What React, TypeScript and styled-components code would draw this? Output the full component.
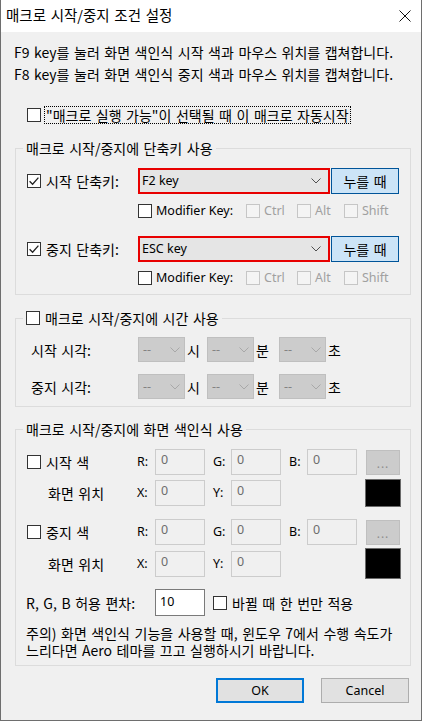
import React from "react";
import styled, { createGlobalStyle } from "styled-components";

const Global = createGlobalStyle`
  html, body { margin: 0; padding: 0; background: #ffffff; }
  body {
    font-family: "Noto Sans CJK KR", "Noto Sans", sans-serif;
    font-size: 14px;
    word-spacing: 1.4px;
    color: #000;
  }
  * { box-sizing: border-box; }
`;

const Latin = styled.span`
  font-family: "Noto Sans", "Noto Sans CJK KR", sans-serif;
  font-size: 12.5px;
  word-spacing: 0;
`;

const Window = styled.div`
  width: 422px;
  height: 721px;
  border: 1px solid #6e6e6e;
  border-top: none;
  background: #f0f0f0;
  display: flex;
  flex-direction: column;
`;

const TitleBar = styled.div`
  height: 32px;
  background: #ffffff;
  display: flex;
  align-items: center;
  padding-left: 5px;
  flex-shrink: 0;
`;

const Title = styled.div`
  flex: 1;
  font-size: 14.5px;
  line-height: 18px;
  padding-bottom: 3px;
`;

const CloseBox = styled.div`
  width: 32px;
  height: 32px;
  display: flex;
  align-items: center;
  justify-content: center;
`;

const Body = styled.div`
  padding-top: 9px;
  display: flex;
  flex-direction: column;
`;

const InfoText = styled.div`
  padding-left: 13px;
  line-height: 22px;
  white-space: nowrap;
`;

const AutoRow = styled.div`
  margin: 21px 0 0 26px;
  height: 18px;
  display: flex;
  align-items: center;
`;

const FocusLabel = styled.span`
  margin-left: 3px;
  border: 1px dotted #000;
  height: 18px;
  line-height: 16px;
  padding: 0 1px;
  white-space: nowrap;
`;

const Box = styled.span<{ $disabled?: boolean }>`
  width: 14px;
  height: 14px;
  flex-shrink: 0;
  display: inline-flex;
  align-items: center;
  justify-content: center;
  border: 1px solid ${(p) => (p.$disabled ? "#c6c6c6" : "#333333")};
  background: ${(p) => (p.$disabled ? "#f4f4f4" : "#ffffff")};
`;

const CheckItem = styled.span<{ $w?: number; $gap?: number; $disabled?: boolean }>`
  display: inline-flex;
  align-items: center;
  gap: ${(p) => p.$gap ?? 5}px;
  width: ${(p) => (p.$w ? `${p.$w}px` : "auto")};
  white-space: nowrap;
  color: ${(p) => (p.$disabled ? "#a0a0a0" : "#000")};
  line-height: 16px;
  flex-shrink: 0;
`;

const Check: React.FC<{ checked?: boolean; disabled?: boolean }> = ({ checked, disabled }) => (
  <Box $disabled={disabled}>
    {checked && (
      <svg width="12" height="12" viewBox="0 0 12 12">
        <path d="M1.6 6.2 L4.6 9.2 L10.4 2.6" stroke="#222" strokeWidth="1.3" fill="none" />
      </svg>
    )}
  </Box>
);

const Chevron: React.FC<{ color: string }> = ({ color }) => (
  <svg width="10" height="6" viewBox="0 0 10 6">
    <path d="M0.5 0.5 L5 5 L9.5 0.5" stroke={color} strokeWidth="1" fill="none" />
  </svg>
);

const Group = styled.fieldset<{ $mt: number }>`
  margin: ${(p) => p.$mt}px 0 0 14px;
  width: 396px;
  min-width: 0;
  padding: 0;
  border: 1px solid #dcdcdc;
`;

const Legend = styled.legend`
  margin-left: 7px;
  padding: 0 3px;
  height: 16px;
  line-height: 16px;
  white-space: nowrap;
`;

const LegendInner = styled.span`
  display: inline-flex;
  align-items: center;
  gap: 5px;
  height: 16px;
`;

const GroupBody = styled.div<{ $pad: string }>`
  padding: ${(p) => p.$pad};
  display: flex;
  flex-direction: column;
`;

const ShortcutRow = styled.div<{ $mt?: number }>`
  margin-top: ${(p) => p.$mt ?? 0}px;
  height: 26px;
  display: flex;
  align-items: center;
`;

const KeyCombo = styled.div`
  width: 192px;
  height: 26px;
  border: 2px solid #e80000;
  background: #e5e5e5;
  display: flex;
  align-items: center;
  justify-content: space-between;
  padding: 0 7px 0 2px;
  line-height: 16px;
`;

const PressButton = styled.div`
  width: 68px;
  height: 26px;
  margin-left: 1px;
  background: #cce4f7;
  border: 1px solid #005499;
  display: flex;
  align-items: center;
  justify-content: center;
  line-height: 16px;
`;

const ModRow = styled.div<{ $mt: number }>`
  margin-top: ${(p) => p.$mt}px;
  padding-left: 111px;
  height: 16px;
  display: flex;
  align-items: center;
`;

const TimeRow = styled.div<{ $mt?: number }>`
  margin-top: ${(p) => p.$mt ?? 0}px;
  padding-left: 15px;
  height: 25px;
  display: flex;
  align-items: center;
`;

const TimeLabel = styled.span`
  width: 107px;
  line-height: 16px;
  white-space: nowrap;
`;

const TimeCombo = styled.div`
  width: 47px;
  height: 25px;
  background: #cccccc;
  border: 1px solid #bfbfbf;
  display: flex;
  align-items: center;
  justify-content: space-between;
  padding: 0 4px 0 4px;
  color: #838383;
  line-height: 16px;
`;

const Unit = styled.span<{ $w: number }>`
  width: ${(p) => p.$w}px;
  padding-left: 2px;
  line-height: 16px;
`;

const ColorRow = styled.div<{ $h: number; $mt?: number }>`
  margin-top: ${(p) => p.$mt ?? 0}px;
  padding-left: 11px;
  height: ${(p) => p.$h}px;
  display: grid;
  grid-template-columns: 110px 18px 50px 8px 18px 50px 8px 18px 50px 8px 36px;
  align-items: center;
`;

const AxisLabel = styled(Latin)<{ $col: number }>`
  grid-column: ${(p) => p.$col};
  line-height: 16px;
`;

const SubLabel = styled.span`
  grid-column: 1;
  padding-left: 21px;
  line-height: 16px;
  white-space: nowrap;
`;

const NumInput = styled.div<{ $col: number; $enabled?: boolean }>`
  grid-column: ${(p) => p.$col};
  height: ${(p) => (p.$enabled ? 27 : 26)}px;
  border: 1px solid ${(p) => (p.$enabled ? "#7a7a7a" : "#cccccc")};
  background: ${(p) => (p.$enabled ? "#ffffff" : "#f0f0f0")};
  color: ${(p) => (p.$enabled ? "#000" : "#6d6d6d")};
  padding: ${(p) => (p.$enabled ? "4px 4px" : "2px 5px")};
  line-height: 16px;
  font-family: "Noto Sans", sans-serif;
  font-size: 12.5px;
`;

const DotsButton = styled.div`
  grid-column: 11;
  justify-self: center;
  width: 34px;
  height: 25px;
  background: #cccccc;
  border: 1px solid #bfbfbf;
  color: #8e8e8e;
  display: flex;
  align-items: flex-end;
  justify-content: center;
  padding-bottom: 4px;
  line-height: 12px;
  font-family: "Noto Sans", sans-serif;
  font-size: 12px;
  letter-spacing: 1px;
`;

const Swatch = styled.div<{ $h: number }>`
  grid-column: 11;
  width: 36px;
  height: ${(p) => p.$h}px;
  background: #000;
  border: 1px solid #6a6a6a;
`;

const ToleranceLabel = styled.span`
  grid-column: 1 / 3;
  margin-left: -1px;
  line-height: 16px;
  white-space: nowrap;
`;

const OnceItem = styled.span`
  grid-column: 5 / -1;
  display: inline-flex;
  align-items: center;
  gap: 5px;
  line-height: 16px;
  white-space: nowrap;
`;

const Note = styled.div`
  margin-top: 9px;
  padding-left: 10px;
  line-height: 17px;
  white-space: nowrap;
`;

const Footer = styled.div`
  margin-top: 12px;
  padding-right: 12px;
  display: flex;
  justify-content: flex-end;
  gap: 17px;
`;

const DlgButton = styled.div<{ $primary?: boolean }>`
  width: 88px;
  height: 25px;
  background: #e1e1e1;
  border: ${(p) => (p.$primary ? "2px solid #0078d7" : "1px solid #adadad")};
  display: flex;
  align-items: center;
  justify-content: center;
  line-height: 16px;
  font-family: "Noto Sans", sans-serif;
  font-size: 12.5px;
`;

const ShortcutBlock: React.FC<{ label: string; value: string; first?: boolean }> = ({ label, value, first }) => (
  <>
    <ShortcutRow $mt={first ? 0 : 17}>
      <CheckItem $w={111}>
        <Check checked />
        {label}
      </CheckItem>
      <KeyCombo>
        <Latin>{value}</Latin>
        <Chevron color="#505050" />
      </KeyCombo>
      <PressButton>누를 때</PressButton>
    </ShortcutRow>
    <ModRow $mt={first ? 9 : 8}>
      <CheckItem $w={108} $gap={4}>
        <Check />
        <Latin>Modifier Key:</Latin>
      </CheckItem>
      <CheckItem $w={51} $gap={4} $disabled>
        <Check disabled />
        <Latin>Ctrl</Latin>
      </CheckItem>
      <CheckItem $w={47} $gap={4} $disabled>
        <Check disabled />
        <Latin>Alt</Latin>
      </CheckItem>
      <CheckItem $gap={4} $disabled>
        <Check disabled />
        <Latin>Shift</Latin>
      </CheckItem>
    </ModRow>
  </>
);

const TimeBlock: React.FC<{ label: string; mt?: number }> = ({ label, mt }) => (
  <TimeRow $mt={mt}>
    <TimeLabel>{label}</TimeLabel>
    <TimeCombo>
      <Latin>--</Latin>
      <Chevron color="#a8a8a8" />
    </TimeCombo>
    <Unit $w={22}>시</Unit>
    <TimeCombo>
      <Latin>--</Latin>
      <Chevron color="#a8a8a8" />
    </TimeCombo>
    <Unit $w={25}>분</Unit>
    <TimeCombo>
      <Latin>--</Latin>
      <Chevron color="#a8a8a8" />
    </TimeCombo>
    <Unit $w={20}>초</Unit>
  </TimeRow>
);

const ColorBlock: React.FC<{ label: string; mt?: number; swatchH: number }> = ({ label, mt, swatchH }) => (
  <>
    <ColorRow $h={26} $mt={mt}>
      <CheckItem>
        <Check />
        {label}
      </CheckItem>
      <AxisLabel $col={2}>R:</AxisLabel>
      <NumInput $col={3}>0</NumInput>
      <AxisLabel $col={5}>G:</AxisLabel>
      <NumInput $col={6}>0</NumInput>
      <AxisLabel $col={8}>B:</AxisLabel>
      <NumInput $col={9}>0</NumInput>
      <DotsButton>...</DotsButton>
    </ColorRow>
    <ColorRow $h={swatchH} $mt={mt ? 3 : 4}>
      <SubLabel>화면 위치</SubLabel>
      <AxisLabel $col={2}>X:</AxisLabel>
      <NumInput $col={3}>0</NumInput>
      <AxisLabel $col={5}>Y:</AxisLabel>
      <NumInput $col={6}>0</NumInput>
      <Swatch $h={swatchH} />
    </ColorRow>
  </>
);

export default function App() {
  return (
    <>
      <Global />
      <Window>
        <TitleBar>
          <Title>매크로 시작/중지 조건 설정</Title>
          <CloseBox>
            <svg width="12" height="12" viewBox="0 0 12 12">
              <path d="M0.5 0.5 L11.5 11.5 M11.5 0.5 L0.5 11.5" stroke="#111" strokeWidth="1" fill="none" />
            </svg>
          </CloseBox>
        </TitleBar>
        <Body>
          <InfoText>
            F9 key를 눌러 화면 색인식 시작 색과 마우스 위치를 캡쳐합니다.
            <br />
            F8 key를 눌러 화면 색인식 중지 색과 마우스 위치를 캡쳐합니다.
          </InfoText>
          <AutoRow>
            <Check />
            <FocusLabel>"매크로 실행 가능"이 선택될 때 이 매크로 자동시작</FocusLabel>
          </AutoRow>

          <Group $mt={16}>
            <Legend>매크로 시작/중지에 단축키 사용</Legend>
            <GroupBody $pad="12px 0 8px 11px">
              <ShortcutBlock label="시작 단축키:" value="F2 key" first />
              <ShortcutBlock label="중지 단축키:" value="ESC key" />
            </GroupBody>
          </Group>

          <Group $mt={15}>
            <Legend>
              <LegendInner>
                <Check />
                매크로 시작/중지에 시간 사용
              </LegendInner>
            </Legend>
            <GroupBody $pad="11px 0 7px 0">
              <TimeBlock label="시작 시각:" />
              <TimeBlock label="중지 시각:" mt={12} />
            </GroupBody>
          </Group>

          <Group $mt={14}>
            <Legend>매크로 시작/중지에 화면 색인식 사용</Legend>
            <GroupBody $pad="12px 0 6px 0">
              <ColorBlock label="시작 색" swatchH={28} />
              <ColorBlock label="중지 색" mt={12} swatchH={31} />
              <ColorRow $h={27} $mt={10}>
                <ToleranceLabel>R, G, B 허용 편차:</ToleranceLabel>
                <NumInput $col={3} $enabled>10</NumInput>
                <OnceItem>
                  <Check />
                  바뀔 때 한 번만 적용
                </OnceItem>
              </ColorRow>
              <Note>
                주의) 화면 색인식 기능을 사용할 때, 윈도우 7에서 수행 속도가
                <br />
                느리다면 Aero 테마를 끄고 실행하시기 바랍니다.
              </Note>
            </GroupBody>
          </Group>

          <Footer>
            <DlgButton $primary>OK</DlgButton>
            <DlgButton>Cancel</DlgButton>
          </Footer>
        </Body>
      </Window>
    </>
  );
}
